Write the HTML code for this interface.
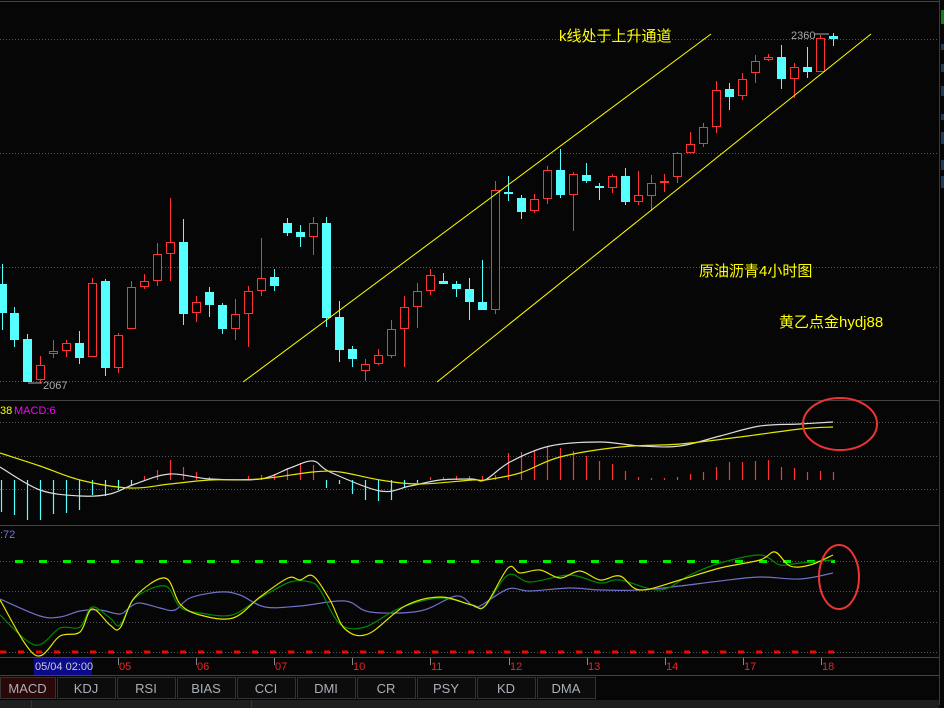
<!DOCTYPE html>
<html><head><meta charset="utf-8"><style>
html,body{margin:0;padding:0;background:#000;width:944px;height:708px;overflow:hidden}
svg{display:block}
text{font-family:"Liberation Sans","Noto Sans CJK SC",sans-serif}
</style></head><body>
<svg id="s" width="944" height="708" xmlns="http://www.w3.org/2000/svg">
<rect width="944" height="708" fill="#060606"/>
<line x1="0" y1="1.5" x2="939" y2="1.5" stroke="#444"/>
<line x1="939.5" y1="0" x2="939.5" y2="705" stroke="#3a3a3a"/>
<g stroke="#555" stroke-dasharray="1,2">
<line x1="0" y1="39.5" x2="938" y2="39.5"/><line x1="0" y1="153.5" x2="938" y2="153.5"/>
<line x1="0" y1="267.5" x2="938" y2="267.5"/><line x1="0" y1="381.5" x2="938" y2="381.5"/>
<line x1="0" y1="422.5" x2="938" y2="422.5"/><line x1="0" y1="456.5" x2="938" y2="456.5"/><line x1="0" y1="489.5" x2="938" y2="489.5"/>
<line x1="0" y1="561.5" x2="938" y2="561.5"/><line x1="0" y1="591.5" x2="938" y2="591.5"/><line x1="0" y1="622.5" x2="938" y2="622.5"/><line x1="0" y1="652.5" x2="938" y2="652.5"/>
</g>
<line x1="0" y1="400.5" x2="939" y2="400.5" stroke="#444"/>
<line x1="0" y1="525.5" x2="939" y2="525.5" stroke="#444"/>
<line x1="0" y1="657.5" x2="939" y2="657.5" stroke="#444"/>
<line x1="0" y1="675.5" x2="939" y2="675.5" stroke="#444"/>
<g id="cand"></g>
<line x1="243" y1="382" x2="711" y2="34" stroke="#ffff00" stroke-width="1"/>
<line x1="437" y1="382" x2="871" y2="34" stroke="#ffff00" stroke-width="1"/>
<text x="559" y="41" fill="#ffff00" font-size="15">k线处于上升通道</text>
<text x="699" y="276" fill="#ffff00" font-size="15">原油沥青4小时图</text>
<text x="779" y="327" fill="#ffff00" font-size="15">黄乙点金hydj88</text>
<text x="791" y="39" fill="#aaa" font-size="11">2360</text>
<line x1="815" y1="34" x2="829" y2="34" stroke="#aaa"/>
<text x="43" y="389" fill="#aaa" font-size="11">2067</text>
<line x1="28" y1="383" x2="42" y2="383" stroke="#aaa"/>
<text x="0" y="414" fill="#ffff00" font-size="11">38</text>
<text x="14" y="414" fill="#ff00ff" font-size="11">MACD:6</text>
<text x="0" y="538" fill="#7777dd" font-size="11">:72</text>
<g id="hist"></g>
<g id="lines" fill="none" stroke-width="1.2"></g>
<line x1="15" y1="561.5" x2="835" y2="561.5" stroke="#00ee00" stroke-width="3" stroke-dasharray="8,16"/>
<line x1="0" y1="652" x2="835" y2="652" stroke="#ff0000" stroke-width="3" stroke-dasharray="6,12"/>
<g id="lines2" fill="none" stroke-width="1.2"></g>
<ellipse cx="840" cy="424" rx="37" ry="26" fill="none" stroke="#ee3333" stroke-width="2"/>
<ellipse cx="839" cy="577" rx="20" ry="32" fill="none" stroke="#ee3333" stroke-width="2"/>
<rect x="34" y="658" width="58" height="17" fill="#0a0a8a"/>
<text x="35" y="670" fill="#ccc" font-size="11">05/04 02:00</text>
<g id="dates" fill="#ee2222" font-size="11"></g>
<g id="tabs"></g>
<rect x="0" y="700" width="939" height="8" fill="#1e1e1e"/>
<line x1="31.5" y1="700" x2="31.5" y2="708" stroke="#333"/>
<line x1="251.5" y1="700" x2="251.5" y2="708" stroke="#333"/>
<g fill="#1d3a5a"><rect x="941" y="10" width="3" height="14" fill="#1a7a1a"/><rect x="941" y="44" width="3" height="6"/><rect x="941" y="64" width="3" height="8"/><rect x="941" y="86" width="3" height="10"/><rect x="941" y="114" width="3" height="6"/><rect x="941" y="132" width="3" height="12"/><rect x="941" y="160" width="3" height="10"/><rect x="941" y="176" width="3" height="12"/></g>
</svg>
<script>
var C=[[2,'c',284,313,264,330],[14,'c',313,340,307,347],[27,'c',339,382,334,382],[40,'r',365,380,356,383],[53,'r',351,354,340,358],[66,'r',343,351,340,357],[79,'c',343,358,331,364],[92,'r',283,357,278,357],[105,'c',281,368,279,376],[118,'r',335,368,333,373],[131,'r',287,329,281,329],[144,'r',281,287,274,289],[157,'r',254,281,243,286],[170,'r',242,254,198,281],[183,'c',242,314,219,325],[196,'r',302,313,296,322],[209,'c',292,305,287,317],[222,'c',305,329,303,334],[235,'r',314,329,299,340],[248,'r',291,314,286,347],[261,'r',278,291,238,296],[274,'c',277,286,269,291],[287,'c',223,233,218,236],[300,'c',232,237,225,247],[313,'r',223,237,217,255],[326,'c',223,318,217,327],[339,'c',317,350,301,362],[352,'c',349,359,346,367],[365,'r',364,371,359,381],[378,'r',355,364,349,365],[391,'r',329,356,320,358],[404,'r',307,329,296,367],[417,'r',291,307,283,328],[430,'r',275,291,269,295],[443,'c',281,284,273,284],[456,'c',284,289,281,297],[469,'c',289,302,278,320],[482,'c',302,310,260,310],[495,'r',190,310,181,314],[508,'c',192,194,176,201],[521,'c',198,212,195,219],[534,'r',199,211,194,213],[547,'r',170,199,166,204],[560,'c',170,195,149,198],[573,'r',174,195,172,231],[586,'c',175,181,163,183],[599,'c',186,188,183,200],[612,'r',176,188,174,193],[625,'c',176,202,168,205],[638,'r',195,202,171,205],[651,'r',183,196,175,211],[664,'r',181,182,174,192],[677,'r',153,177,152,183],[690,'r',144,153,132,153],[703,'r',127,144,123,147],[716,'r',90,127,81,133],[729,'c',89,97,83,110],[742,'r',79,96,73,100],[755,'r',61,73,55,83],[768,'r',57,60,54,61],[781,'c',57,79,45,89],[794,'r',67,79,63,98],[807,'c',67,72,47,78],[820,'r',38,72,35,72],[833,'c',36,39,33,46]];
var h='';C.forEach(function(c){var x=c[0],col=c[1]=='c'?'#55ffff':'#ff3333';
h+='<line x1="'+(x+.5)+'" y1="'+c[4]+'" x2="'+(x+.5)+'" y2="'+c[5]+'" stroke="'+col+'"/>';
var ht=Math.max(1,c[3]-c[2]);
if(c[1]=='c')h+='<rect x="'+(x-4)+'" y="'+c[2]+'" width="9" height="'+ht+'" fill="'+col+'"/>';
else h+='<rect x="'+(x-3.5)+'" y="'+(c[2]+.5)+'" width="8" height="'+(ht-1<1?1:ht-1)+'" fill="#060606" stroke="'+col+'"/>';});
document.getElementById('cand').innerHTML=h;
var H=[[1,512],[14,515],[27,520],[40,520],[53,514],[66,513],[79,510],[92,495],[105,496],[118,490],[131,485],[144,476],[157,470],[170,460],[183,467],[196,472],[209,477],[248,476],[261,475],[274,474],[287,468],[300,463],[313,465],[326,488],[339,484],[352,494],[365,500],[378,501],[391,500],[404,488],[417,483],[430,477],[443,477],[456,476],[469,476],[482,476],[495,475],[508,453],[521,452],[534,451],[547,447],[560,448],[573,451],[586,456],[599,461],[612,464],[625,471],[638,477],[651,478],[664,478],[677,477],[690,474],[703,472],[716,467],[729,462],[742,462],[755,461],[768,460],[781,467],[794,468],[807,472],[820,471],[833,472]];
h='';H.forEach(function(b){var z=480,col=b[1]>z?'#55ffff':'#ff3333';h+='<line x1="'+(b[0]+.5)+'" y1="'+z+'" x2="'+(b[0]+.5)+'" y2="'+b[1]+'" stroke="'+col+'" stroke-width="1.2"/>';});
document.getElementById('hist').innerHTML=h;
function sm(s){var p=s.split(' ').map(function(q){return q.split(',').map(Number)});var d='M'+p[0][0]+','+p[0][1];
for(var i=0;i<p.length-1;i++){var p0=p[i-1]||p[i],p1=p[i],p2=p[i+1],p3=p[i+2]||p2;
d+=' C'+(p1[0]+(p2[0]-p0[0])/6).toFixed(1)+','+(p1[1]+(p2[1]-p0[1])/6).toFixed(1)+' '+(p2[0]-(p3[0]-p1[0])/6).toFixed(1)+','+(p2[1]-(p3[1]-p1[1])/6).toFixed(1)+' '+p2[0]+','+p2[1];}return d;}
function L(id,arr){var g='';arr.forEach(function(a){g+='<path d="'+sm(a[1])+'" stroke="'+a[0]+'"/>';});document.getElementById(id).innerHTML=g;}
L('lines',[['#dddddd',"0,467 40,490 80,496 110,494 135,484 170,474 210,479 260,479 290,468 313,461 330,472 380,491 410,486 440,480 472,479 485,480 510,462 550,446 600,442 640,446 680,446 720,436 760,426 800,424 833,422"],['#e6e600',"0,453 40,466 80,480 130,488 170,484 210,480 260,479 313,472 340,472 380,480 420,484 472,480 485,480 520,473 560,457 620,447 680,444 740,437 800,429 833,427"]]);
L('lines2',[['#7070c8',"0,599 40,616 60,617 80,611 100,610 120,614 130,607 140,603 160,608 175,610 190,598 220,592 240,595 265,607 300,606 345,601 370,612 420,611 456,596 472,605 480,606 508,589 530,591 570,588 600,590 640,590 680,586 720,581 760,577 800,579 833,573"],['#008800',"0,615 35,645 60,628 80,627 92,607 110,618 120,625 135,598 165,586 180,607 200,613 232,615 260,598 290,582 310,582 320,590 340,624 365,627 400,608 440,598 472,605 485,606 508,575 530,582 570,575 600,583 620,580 660,590 690,575 720,563 760,555 780,565 800,563 833,560"],['#e6e600',"0,600 35,655 60,636 80,632 92,609 110,625 120,628 135,597 165,578 180,604 200,615 233,618 260,597 288,578 300,580 313,576 330,600 345,629 368,634 405,606 440,597 472,605 485,606 508,568 520,573 540,570 560,578 580,571 600,580 620,576 640,590 680,580 720,568 760,560 775,552 790,566 810,565 833,555"]]);
var D=[[119,'05'],[197,'06'],[275,'07'],[353,'10'],[431,'11'],[510,'12'],[588,'13'],[666,'14'],[744,'17'],[822,'18']];
h='';D.forEach(function(d){h+='<line x1="'+(d[0]-0.5)+'" y1="658" x2="'+(d[0]-0.5)+'" y2="665" stroke="#888"/><text x="'+d[0]+'" y="670">'+d[1]+'</text>';});
document.getElementById('dates').innerHTML=h;
var T=['MACD','KDJ','RSI','BIAS','CCI','DMI','CR','PSY','KD','DMA'];
h='';T.forEach(function(t,i){var x=i==0?0:57+(i-1)*60,w=i==0?55:58;
h+='<rect x="'+(x+.5)+'" y="677.5" width="'+w+'" height="21" fill="'+(i==0?'#2a0808':'#0c0c0c')+'" stroke="#333"/><text x="'+(x+w/2)+'" y="693" text-anchor="middle" fill="#aab0b8" font-size="13">'+t+'</text>';});
document.getElementById('tabs').innerHTML=h;
</script>
</body></html>
